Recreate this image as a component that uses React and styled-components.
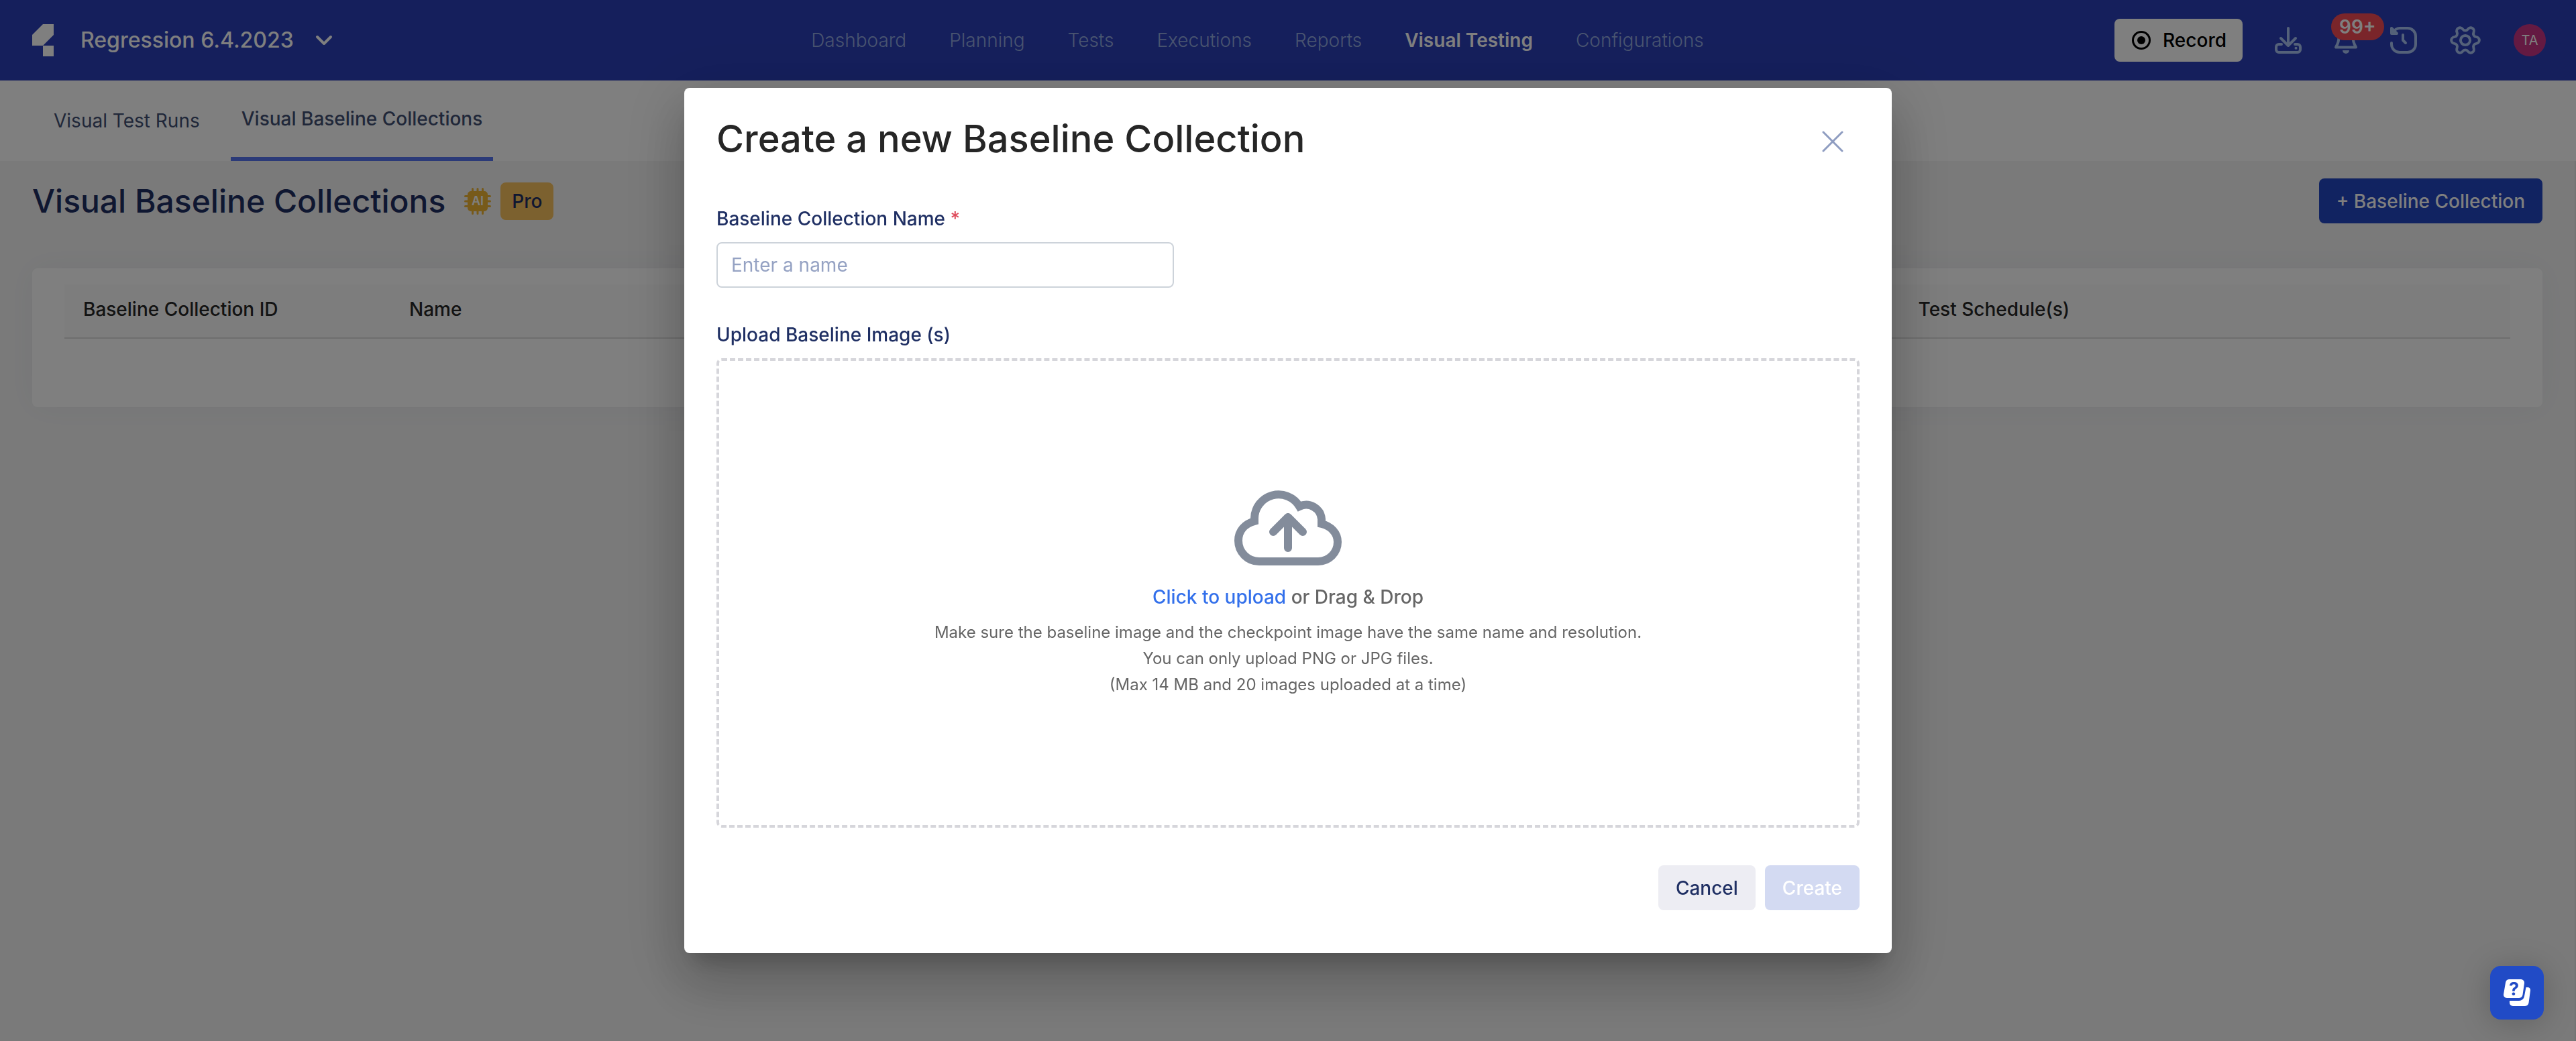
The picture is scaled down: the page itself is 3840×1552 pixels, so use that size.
import React from "react";
import styled, { createGlobalStyle } from "styled-components";

const GlobalStyle = createGlobalStyle`
  *, *::before, *::after { box-sizing: border-box; }
  body { margin: 0; background: #f5f5f5; }
  body, button, input, table {
    font-family: Inter, "Liberation Sans", sans-serif;
    font-size: 28px;
    line-height: 34px;
  }
  button { border: 0; padding: 0; background: none; color: inherit; cursor: pointer; }
  svg { display: block; flex: none; }
`;

const Page = styled.div`
  min-height: 100vh;
  background: #f5f5f5;
`;

/* Top bar */

const TopBar = styled.header`
  display: flex;
  align-items: center;
  height: 120px;
  padding: 0 45px 0 48px;
  background: #2b3fb9;
  color: #fff;
`;

const Brand = styled.div`
  flex: 1;
  display: flex;
  align-items: center;
  gap: 40px;
`;

const ProjectPicker = styled.button`
  display: flex;
  align-items: center;
  gap: 32px;
  font-size: 32px;
  font-weight: 500;
  line-height: 40px;
`;

const MainNav = styled.nav`
  display: flex;
  gap: 64px;
  margin-right: 94px;
`;

const NavLink = styled.a`
  color: ${(p) => (p.$active ? "#fff" : "#93a9e0")};
  font-weight: ${(p) => (p.$active ? 600 : 300)};
  text-decoration: none;
`;

const Tools = styled.div`
  flex: 1;
  display: flex;
  align-items: center;
  justify-content: flex-end;
  gap: 48px;
`;

const RecordButton = styled.button`
  display: flex;
  align-items: center;
  gap: 18px;
  height: 64px;
  padding: 0 24px 0 26px;
  border-radius: 8px;
  background: #fff;
  color: #000;
  font-weight: 500;
`;

const ToolButton = styled.button`
  position: relative;
  color: #a8c2f2;
`;

const CountBadge = styled.span`
  position: absolute;
  top: -20px;
  left: -4px;
  height: 40px;
  padding: 0 12px;
  border-radius: 20px;
  background: #f54a54;
  color: #fff;
  font-weight: 600;
  line-height: 40px;
`;

const Avatar = styled.button`
  width: 48px;
  height: 48px;
  border-radius: 50%;
  background: #c83484;
  color: #fff;
  font-size: 20px;
  line-height: 24px;
`;

/* Section tabs */

const Tabs = styled.nav`
  display: flex;
  gap: 30px;
  height: 120px;
  padding: 0 64px;
  background: #fff;
`;

const Tab = styled.a`
  display: flex;
  align-items: center;
  padding: 0 16px;
  border-bottom: ${(p) => (p.$active ? "6px solid #5674f0" : "0")};
  color: #414f73;
  font-weight: ${(p) => (p.$active ? 500 : 400)};
  text-decoration: none;
`;

/* Page content */

const Content = styled.main`
  padding: 26px 48px 48px;
  border-right: 2px solid #e8e8e8;
  min-height: calc(100vh - 240px);
`;

const TitleRow = styled.div`
  display: flex;
  align-items: center;
  height: 67px;
  margin-bottom: 67px;
`;

const PageTitle = styled.h1`
  margin: 0 28px 0 0;
  color: #1f2f63;
  font-size: 48px;
  font-weight: 500;
  line-height: 56px;
`;

const ProBadge = styled.span`
  height: 56px;
  margin-left: 14px;
  padding: 0 17px;
  border-radius: 8px;
  background: #f8c25f;
  color: #1f2f63;
  line-height: 56px;
  font-weight: 500;
`;

const Button = styled.button`
  height: 67px;
  padding: 0 26px;
  border-radius: 8px;
  background: ${(p) => p.$bg};
  color: ${(p) => p.$color};
  font-weight: 500;
`;

const AddButton = styled(Button)`
  margin-left: auto;
`;

const Card = styled.section`
  padding: 24px 48px 102px;
  border-radius: 8px;
  background: #fff;
  box-shadow: 0 0 48px rgba(50, 71, 140, 0.06);
`;

const Table = styled.table`
  width: 100%;
  table-layout: fixed;
  border-collapse: separate;
  border-spacing: 0;
`;

const HeadCell = styled.th`
  width: ${(p) => p.$width};
  padding: 20px 28px 25px;
  border-bottom: 2px solid #dcdcdc;
  background: #fafafa;
  color: #262626;
  font-weight: 500;
  text-align: left;
`;

/* Dialog */

const Backdrop = styled.div`
  position: fixed;
  inset: 0;
  display: flex;
  align-items: center;
  justify-content: center;
  background: rgba(0, 0, 0, 0.5);
`;

const Dialog = styled.form`
  display: flex;
  flex-direction: column;
  width: 100%;
  max-width: 1800px;
  padding: 48px 48px 64px;
  border-radius: 8px;
  background: #fff;
  box-shadow:
    0 22px 30px -14px rgba(0, 0, 0, 0.2),
    0 48px 76px 6px rgba(0, 0, 0, 0.14),
    0 18px 92px 16px rgba(0, 0, 0, 0.12);
`;

const DialogHead = styled.div`
  display: flex;
  align-items: flex-start;
  justify-content: space-between;
  margin-bottom: 66px;
`;

const DialogTitle = styled.h2`
  margin: 0;
  color: #262626;
  font-size: 56px;
  font-weight: 500;
  line-height: 56px;
`;

const CloseButton = styled.button`
  padding: 16px 24px;
  color: #8f9dc1;
`;

const Label = styled.label`
  margin-bottom: 18px;
  color: #1f2f63;
  font-weight: 500;
`;

const Required = styled.span`
  color: #de4a5a;
`;

const TextField = styled.input`
  width: 100%;
  max-width: 682px;
  height: 68px;
  margin-bottom: 53px;
  padding: 0 20px;
  border: 2px solid #cdd3da;
  border-radius: 8px;
  background: #fff;
  color: #1f2f63;
  &::placeholder { color: #95a2c3; opacity: 1; }
`;

const DropZone = styled.label`
  display: flex;
  flex-direction: column;
  align-items: center;
  justify-content: center;
  height: 700px;
  margin-bottom: 56px;
  padding-bottom: 2px;
  border: 4px dashed #d6d6db;
  border-radius: 8px;
  color: #666;
  cursor: pointer;
`;

const FileInput = styled.input`
  position: absolute;
  width: 1px;
  height: 1px;
  overflow: hidden;
  clip-path: inset(50%);
`;

const DropPrompt = styled.span`
  margin: 30px 0 16px;
  font-weight: 500;
`;

const Accent = styled.span`
  color: #3370eb;
`;

const Hint = styled.span`
  font-size: 24px;
  line-height: 39px;
`;

const Actions = styled.div`
  display: flex;
  justify-content: flex-end;
  gap: 14px;
`;

const HelpButton = styled.button`
  position: fixed;
  right: 48px;
  bottom: 32px;
  display: grid;
  place-items: center;
  width: 80px;
  height: 80px;
  border-radius: 16px;
  background: #214bc6;
  box-shadow: 0 4px 48px rgba(0, 0, 0, 0.2);
`;

/* Drawings */

const Logo = () => (
  <svg width="32" height="48" viewBox="0 0 32 48" fill="#fff" aria-hidden="true">
    <path d="M16 0H32V16L16 32H0V16Z M16 32H32V48H16Z" />
  </svg>
);

const Chevron = () => (
  <svg width="26" height="16" viewBox="0 0 26 16" fill="none" stroke="#fff" strokeWidth="4" strokeLinecap="round" strokeLinejoin="round" aria-hidden="true">
    <path d="M3 3L13 13L23 3" />
  </svg>
);

const RecordIcon = () => (
  <svg width="28" height="28" viewBox="0 0 28 28" aria-hidden="true">
    <circle cx="14" cy="14" r="12.5" fill="none" stroke="#000" strokeWidth="3" />
    <circle cx="14" cy="14" r="6" />
  </svg>
);

const line = {
  fill: "none",
  stroke: "currentColor",
  strokeWidth: 4,
  strokeLinecap: "round",
  strokeLinejoin: "round",
  "aria-hidden": true,
};

const DownloadIcon = () => (
  <svg width="40" height="40" viewBox="0 0 40 40" {...line}>
    <path d="M20 2V27M9 17L20 28L31 17" />
    <path d="M10 26H6A4 4 0 0 0 2 30V34A4 4 0 0 0 6 38H34A4 4 0 0 0 38 34V30A4 4 0 0 0 34 26H30" />
    <circle cx="31.5" cy="31.7" r="2" fill="currentColor" stroke="none" />
  </svg>
);

const BellIcon = () => (
  <svg width="36" height="40" viewBox="0 0 36 40" {...line}>
    <path d="M18 3C11 3 7.500 8 7.500 13.500C7.500 21 6.500 24 3 30.500H33C29.500 24 28.500 21 28.500 13.500C28.500 8 25 3 18 3Z" />
    <path d="M13 35H23A5 5 0 0 1 13 35Z" fill="currentColor" stroke="none" />
  </svg>
);

const HistoryIcon = () => (
  <svg width="40" height="40" viewBox="0 0 40 40" {...line}>
    <path d="M2 24V26A12 12 0 0 0 14 38H26A12 12 0 0 0 38 26V14A12 12 0 0 0 26 2H14C9 2 6 5 3 9" />
    <path d="M2 2V10H10Z" fill="currentColor" />
    <path d="M19 12V20L23 24" />
  </svg>
);

const GearIcon = () => (
  <svg width="48" height="48" viewBox="0.5 0.5 23 23" {...line} strokeWidth="1.9">
    <path
      transform="rotate(90 12 12)"
      d="M9.671 4.136a2.34 2.34 0 0 1 4.659 0 2.34 2.34 0 0 0 3.319 1.915 2.34 2.34 0 0 1 2.33 4.033 2.34 2.34 0 0 0 0 3.831 2.34 2.34 0 0 1-2.33 4.033 2.34 2.34 0 0 0-3.319 1.915 2.34 2.34 0 0 1-4.659 0 2.34 2.34 0 0 0-3.32-1.915 2.34 2.34 0 0 1-2.33-4.033 2.34 2.34 0 0 0 0-3.831A2.34 2.34 0 0 1 6.35 6.051a2.34 2.34 0 0 0 3.319-1.915"
    />
    <circle cx="12" cy="12" r="3.4" />
  </svg>
);

const AiChip = () => (
  <svg width="40" height="40" viewBox="0 0 40 40" role="img" aria-label="AI">
    <path
      d="M12.500 1.500V38.500M20 1.500V38.500M27.500 1.500V38.500M1.500 12.500H38.500M1.500 20H38.500M1.500 27.500H38.500"
      stroke="#eeb434"
      strokeWidth="3"
      strokeLinecap="round"
    />
    <rect x="5" y="5" width="30" height="30" rx="5" fill="#eeb434" />
    <text x="20" y="26" textAnchor="middle" fontFamily="Inter, sans-serif" fontSize="18" fontWeight="600" fill="#fff">AI</text>
  </svg>
);

const CloseIcon = () => (
  <svg width="32" height="32" viewBox="0 0 32 32" {...line} strokeWidth="3">
    <path d="M2 2L30 30M30 2L2 30" />
  </svg>
);

const CloudIcon = () => (
  <svg width="160" height="116" viewBox="0 -4 160 116" fill="none" stroke="#838c9b" strokeWidth="12" aria-hidden="true">
    <path d="M37 106A31 31 0 0 1 6 75C6 60 16 50 30 46V42A36 36 0 0 1 97 24A23 23 0 0 1 130 43V50C144 53 154 64 154 77A29 29 0 0 1 125 106Z" />
    <path d="M80 86V40M58 62L80 40L102 62" strokeLinecap="round" strokeLinejoin="round" />
  </svg>
);

const HelpIcon = () => (
  <svg width="60" height="60" viewBox="-10 -10 60 60" aria-hidden="true">
    <path d="M33.500 12H36A4 4 0 0 1 40 16.500L37.500 35A6 6 0 0 1 32 40H14A5 5 0 0 1 9 35V32H23A8 8 0 0 0 31 25Z" fill="#fff" />
    <path d="M9 0H26A5 5 0 0 1 31 5.500L28.500 23A6 6 0 0 1 23 28H5A5 5 0 0 1 0 22.500L3 5A6 6 0 0 1 9 0Z" fill="#fff" />
    <text x="15.500" y="24" textAnchor="middle" fontFamily="Inter, sans-serif" fontSize="27" fontWeight="700" fill="#214bc6">?</text>
  </svg>
);

const NAV = ["Dashboard", "Planning", "Tests", "Executions", "Reports", "Visual Testing", "Configurations"];
const TABS = ["Visual Test Runs", "Visual Baseline Collections"];
const COLUMNS = [
  { name: "Baseline Collection ID", width: "13.33%" },
  { name: "Name", width: "61.7%" },
  { name: "Test Schedule(s)", width: "auto" },
];

export default function App() {
  return (
    <>
      <GlobalStyle />
      <Page>
        <TopBar>
          <Brand>
            <Logo />
            <ProjectPicker type="button">
              Regression 6.4.2023
              <Chevron />
            </ProjectPicker>
          </Brand>
          <MainNav>
            {NAV.map((item) => (
              <NavLink key={item} href="#" $active={item === "Visual Testing"}>{item}</NavLink>
            ))}
          </MainNav>
          <Tools>
            <RecordButton type="button">
              <RecordIcon />
              Record
            </RecordButton>
            <ToolButton type="button" aria-label="Downloads"><DownloadIcon /></ToolButton>
            <ToolButton type="button" aria-label="Notifications">
              <BellIcon />
              <CountBadge>99+</CountBadge>
            </ToolButton>
            <ToolButton type="button" aria-label="History"><HistoryIcon /></ToolButton>
            <ToolButton type="button" aria-label="Settings"><GearIcon /></ToolButton>
            <Avatar type="button">TA</Avatar>
          </Tools>
        </TopBar>

        <Tabs>
          {TABS.map((tab, i) => (
            <Tab key={tab} href="#" $active={i === 1}>{tab}</Tab>
          ))}
        </Tabs>

        <Content>
          <TitleRow>
            <PageTitle>Visual Baseline Collections</PageTitle>
            <AiChip />
            <ProBadge>Pro</ProBadge>
            <AddButton type="button" $bg="#2246c2" $color="#fff">+ Baseline Collection</AddButton>
          </TitleRow>
          <Card>
            <Table>
              <thead>
                <tr>
                  {COLUMNS.map((c) => (
                    <HeadCell key={c.name} scope="col" $width={c.width}>{c.name}</HeadCell>
                  ))}
                </tr>
              </thead>
            </Table>
          </Card>
        </Content>
      </Page>

      <Backdrop>
        <Dialog role="dialog" aria-modal="true" aria-labelledby="dialog-title" onSubmit={(e) => e.preventDefault()}>
          <DialogHead>
            <DialogTitle id="dialog-title">Create a new Baseline Collection</DialogTitle>
            <CloseButton type="button" aria-label="Close"><CloseIcon /></CloseButton>
          </DialogHead>
          <Label htmlFor="collection-name">
            Baseline Collection Name <Required>*</Required>
          </Label>
          <TextField id="collection-name" type="text" placeholder="Enter a name" />
          <Label htmlFor="baseline-images">Upload Baseline Image (s)</Label>
          <DropZone>
            <FileInput id="baseline-images" type="file" accept="image/png,image/jpeg" multiple />
            <CloudIcon />
            <DropPrompt><Accent>Click to upload</Accent> or Drag &amp; Drop</DropPrompt>
            <Hint>Make sure the baseline image and the checkpoint image have the same name and resolution.</Hint>
            <Hint>You can only upload PNG or JPG files.</Hint>
            <Hint>(Max 14 MB and 20 images uploaded at a time)</Hint>
          </DropZone>
          <Actions>
            <Button type="button" $bg="#ededf3" $color="#1f2f63">Cancel</Button>
            <Button type="submit" disabled $bg="#d3daf2" $color="#fff">Create</Button>
          </Actions>
        </Dialog>
      </Backdrop>

      <HelpButton type="button" aria-label="Help"><HelpIcon /></HelpButton>
    </>
  );
}
